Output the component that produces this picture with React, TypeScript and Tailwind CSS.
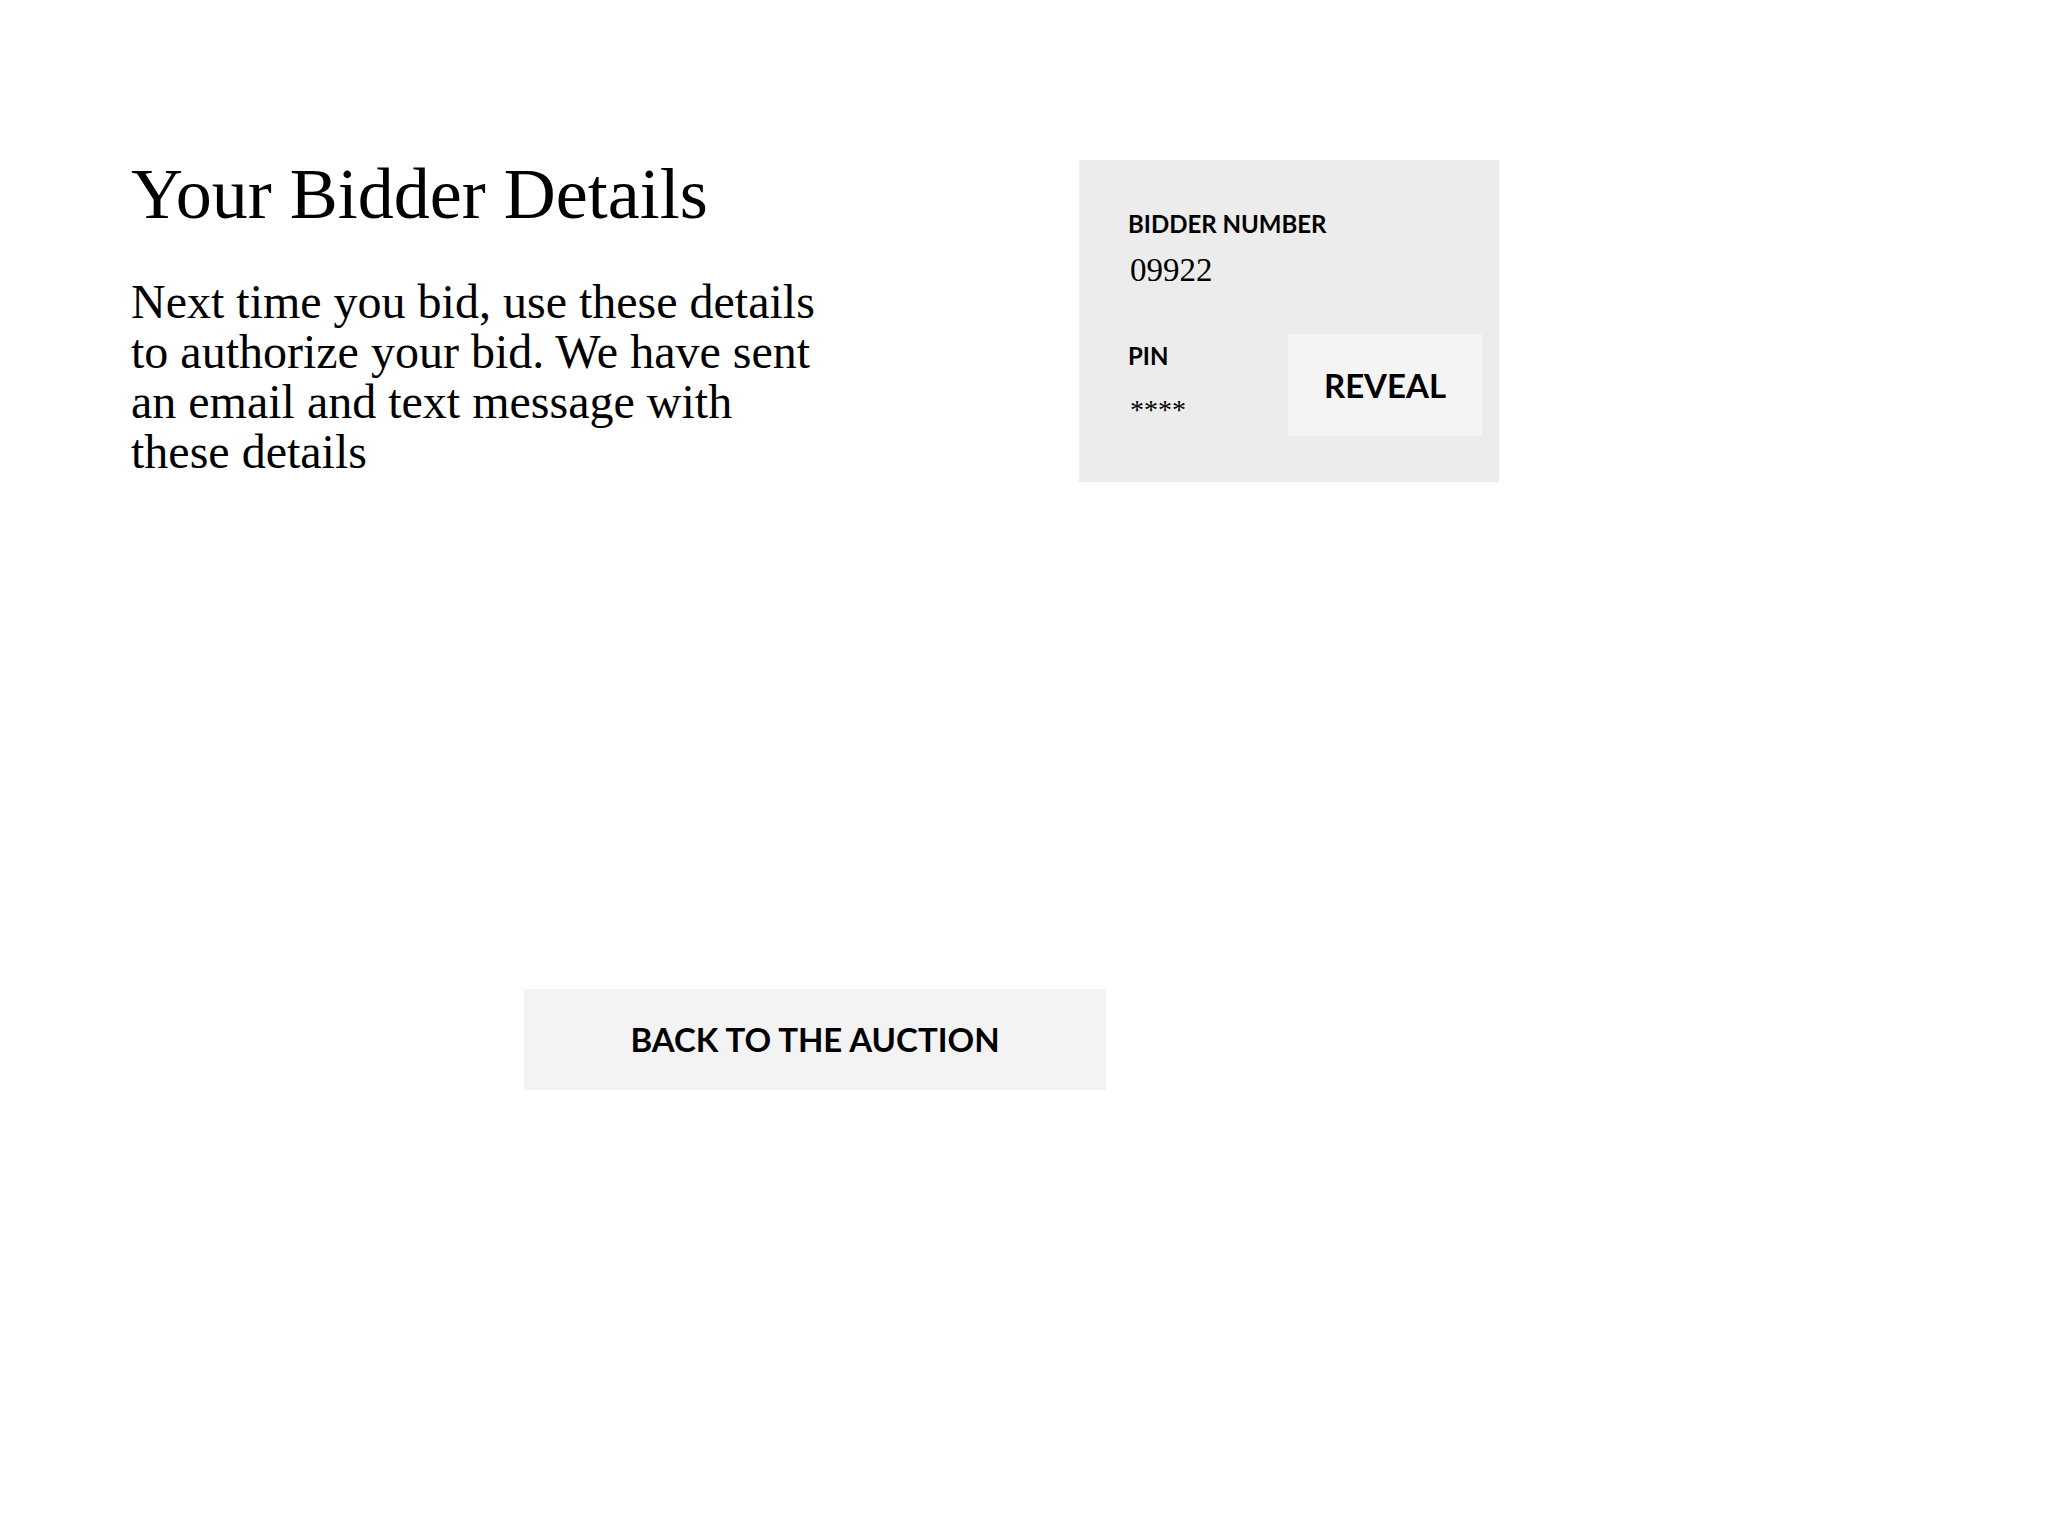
import { useState } from "react";

const serif = "font-['Liberation_Serif',_'Times_New_Roman',_serif]";
const sans = "font-['Lato',_'Liberation_Sans',_sans-serif]";

function BidderCard() {
  const [revealed, setRevealed] = useState(false);

  return (
    <div className="flex h-[322px] w-[420px] flex-col bg-[#ececec] pl-[49px] pr-[17px] pt-[52px] text-black">
      <div className={`${sans} text-[24px] font-bold leading-[24px]`}>BIDDER NUMBER</div>
      <div className={`${serif} mt-[18px] pl-[2px] text-[33px] leading-[33px]`}>09922</div>

      <div className="mt-[47px] flex items-start justify-between">
        <div className="pt-[10px]">
          <div className={`${sans} text-[24px] font-bold leading-[24px]`}>PIN</div>
          <div className={`${serif} mt-[28px] pl-[2px] text-[28px] leading-[28px]`}>
            {revealed ? "4821" : "****"}
          </div>
        </div>
        <button
          type="button"
          onClick={() => setRevealed((r) => !r)}
          className={`${sans} flex h-[102px] w-[194px] items-center justify-center bg-[#f4f4f4] text-[33px] font-bold leading-[33px] text-black`}
        >
          {revealed ? "HIDE" : "REVEAL"}
        </button>
      </div>
    </div>
  );
}

export default function App() {
  return (
    <div className="min-h-screen bg-white pl-[131px] pt-[158px] text-black">
      <div className="w-[1368px]">
        <div className="flex items-start justify-between">
          <div className="w-[700px]">
            <h1 className={`${serif} text-[72px] font-normal leading-[72px]`}>Your Bidder Details</h1>
            <p className={`${serif} mt-[47px] text-[48px] leading-[50px]`}>
              Next time you bid, use these details to authorize your bid. We have sent an email and text message with
              these details
            </p>
          </div>
          <div className="mt-[2px]">
            <BidderCard />
          </div>
        </div>

        <div className="mt-[507px] flex justify-center">
          <button
            type="button"
            className={`${sans} flex h-[101px] w-[582px] items-center justify-center bg-[#f3f3f3] text-[33px] font-bold leading-[33px] text-black`}
          >
            BACK TO THE AUCTION
          </button>
        </div>
      </div>
    </div>
  );
}
